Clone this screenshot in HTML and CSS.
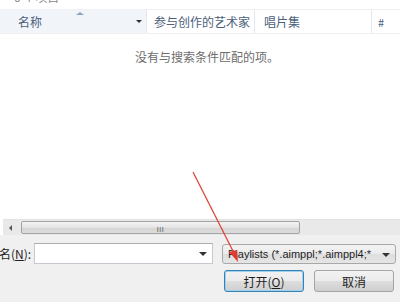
FILE: index.html
```html
<!DOCTYPE html>
<html lang="zh-CN">
<head>
  <meta charset="UTF-8">
  <title>打开播放列表</title>
  <link rel="stylesheet" href="styles.css">
</head>
<body>
  <div class="dialog">
    <!-- 上部的状态栏（被裁掉） -->
    <div class="top-strip"><span class="top-text">0 个项目</span></div>

    <!-- 列表表头 -->
    <div class="header">
      <div class="col col-name active">
        <span>名称</span>
        <span class="sort-arrow"></span>
        <span class="drop-arrow"></span>
      </div>
      <div class="col col-artist">参与创作的艺术家</div>
      <div class="col col-album">唱片集</div>
      <div class="col col-num">#</div>
    </div>

    <div class="list">
      <p class="empty">没有与搜索条件匹配的项。</p>
    </div>

    <!-- 水平滚动条 -->
    <div class="hscroll">
      <span class="scroll-left"></span>
      <div class="thumb"><span class="grip">III</span></div>
    </div>

    <!-- 底部文件名、类型、按钮 -->
    <div class="footer">
      <div class="row">
        <label class="name-label">名(<u>N</u>):</label>
        <div class="name-box"><span class="drop-arrow dark"></span></div>
        <div class="filter-box">
          <span class="filter-text">Playlists (*.aimppl;*.aimppl4;*</span>
          <span class="drop-arrow dark"></span>
        </div>
      </div>
      <div class="row buttons">
        <button class="btn default">打开(<u>O</u>)</button>
        <button class="btn">取消</button>
      </div>
    </div>

    <!-- 标注的红色箭头 -->
    <svg class="pointer" width="400" height="302" viewBox="0 0 400 302">
      <line x1="193" y1="172" x2="236" y2="257" stroke="#e0453a" stroke-width="1.3"/>
      <polygon points="238,262 229,252 237,250" fill="#e5392e"/>
    </svg>
  </div>
</body>
</html>
```

FILE: styles.css
```css
html, body {
  margin: 0;
  padding: 0;
}
body {
  font-family: "Noto Sans CJK SC", "Liberation Sans", sans-serif;
  font-size: 12px;
  background: #ffffff;
}
.dialog {
  position: relative;
  width: 400px;
  height: 302px;
  overflow: hidden;
  display: flex;
  flex-direction: column;
}
.top-strip {
  height: 10px;
  border-bottom: 1px solid #eef0f3;
  overflow: hidden;
  box-sizing: border-box;
}
.top-text {
  display: block;
  margin: -10px 0 0 14px;
  color: #8a8a8a;
  line-height: 14px;
}
.header {
  display: flex;
  height: 23px;
  border-bottom: 1px solid #f0f0f0;
  color: #4c607a;
}
.col {
  display: flex;
  align-items: center;
  padding-left: 7px;
  border-right: 1px solid #e3e8ef;
}
.col-name {
  position: relative;
  padding-left: 18px;
  width: 128px;
}
.col-name.active {
  background: #f1f5fa;
}
.col-artist {
  width: 100px;
}
.col-album {
  width: 107px;
  padding-left: 9px;
}
.col-num {
  flex: 1;
  border-right: none;
  padding-left: 6px;
  font-size: 11px;
}
.sort-arrow {
  position: absolute;
  left: 76px;
  top: 2px;
  border-left: 4px solid transparent;
  border-right: 4px solid transparent;
  border-bottom: 3px solid #8da2bd;
}
.drop-arrow {
  position: absolute;
  right: 4px;
  top: 10px;
  border-left: 3px solid transparent;
  border-right: 3px solid transparent;
  border-top: 3px solid #333;
}
.list {
  flex: 1;
  text-align: center;
}
.empty {
  margin: 14px 0 0 14px;
  color: #6d6d6d;
}
.hscroll {
  display: flex;
  align-items: center;
  height: 16px;
  margin-left: 3px;
  background: #e9e9e9;
  border-top: 1px solid #e2e2e2;
  box-sizing: border-box;
}
.scroll-left {
  width: 0;
  height: 0;
  margin: 0 9px 0 6px;
  border-top: 3px solid transparent;
  border-bottom: 3px solid transparent;
  border-right: 3px solid #555;
}
.thumb {
  width: 279px;
  height: 13px;
  box-sizing: border-box;
  border: 1px solid #a3a3a3;
  border-radius: 2px;
  background: linear-gradient(#f4f4f4, #e4e4e4 50%, #d4d4d4 51%, #dcdcdc);
  text-align: center;
  line-height: 10px;
}
.grip {
  font-family: "Liberation Sans", sans-serif;
  font-size: 7px;
  letter-spacing: 0.5px;
  color: #555;
}
.footer {
  height: 67px;
  background: #f0f0f0;
  padding-top: 8px;
  box-sizing: border-box;
}
.row {
  display: flex;
  align-items: center;
}
.name-label {
  width: 35px;
  margin-left: -1px;
  color: #1e1e1e;
}
.name-box {
  position: relative;
  width: 179px;
  height: 21px;
  box-sizing: border-box;
  border: 1px solid #c5c9cf;
  border-top-color: #abadb3;
  background: #ffffff;
}
.name-box .drop-arrow,
.filter-box .drop-arrow {
  top: 8px;
  right: 5px;
  border-left-width: 4px;
  border-right-width: 4px;
  border-top-width: 4px;
}
.filter-box {
  position: relative;
  width: 174px;
  height: 20px;
  margin-left: 9px;
  box-sizing: border-box;
  border: 1px solid #a8a8a8;
  border-radius: 3px;
  background: linear-gradient(#f3f3f3, #ebebeb 50%, #dedede 51%, #e5e5e5);
}
.filter-text {
  display: block;
  padding-left: 5px;
  line-height: 18px;
  font-family: "Liberation Sans", sans-serif;
  font-size: 11px;
  color: #1e1e1e;
  white-space: nowrap;
  overflow: hidden;
  width: 152px;
}
.buttons {
  margin-top: 6px;
  padding-left: 224px;
  gap: 10px;
}
.btn {
  width: 80px;
  height: 22px;
  padding: 0;
  font-family: "Noto Sans CJK SC", "Liberation Sans", sans-serif;
  font-size: 12px;
  color: #1e1e1e;
  border: 1px solid #a5a5a5;
  border-radius: 3px;
  background: linear-gradient(#f2f2f2, #ebebeb 50%, #dddddd 51%, #cfcfcf);
}
.btn.default {
  border-color: #3c7fb1;
  box-shadow: inset 0 0 0 1px #9ad3ef;
}
.pointer {
  position: absolute;
  left: 0;
  top: 0;
  pointer-events: none;
}
```
